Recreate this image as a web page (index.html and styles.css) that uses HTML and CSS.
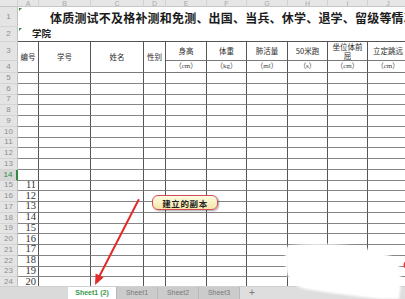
FILE: index.html
```html
<!DOCTYPE html>
<html lang="zh-CN">
<head>
<meta charset="utf-8">
<title>体质测试</title>
<link rel="stylesheet" href="styles.css">
</head>
<body>
<div class="app">
  <div class="sheet">
    <div class="corner"></div>
    <div class="ch">A</div><div class="ch">B</div><div class="ch">C</div><div class="ch">D</div><div class="ch">E</div><div class="ch">F</div><div class="ch">G</div><div class="ch">H</div><div class="ch">I</div><div class="ch">J</div>

    <div class="rh">1</div><div class="title tri">体质测试不及格补测和免测、出国、当兵、休学、退学、留级等情况</div>
    <div class="rh">2</div><div class="college tri">学院</div>

    <div class="rh">3</div>
    <div class="hd tall">编号</div><div class="hd tall">学号</div><div class="hd tall">姓名</div><div class="hd tall">性别</div>
    <div class="hd">身高</div><div class="hd">体重</div><div class="hd">肺活量</div><div class="hd">50米跑</div><div class="hd wrap">坐位体前屈</div><div class="hd">立定跳远</div>
    <div class="rh">4</div>
    <div class="hd u">（cm）</div><div class="hd u">（kg）</div><div class="hd u">（ml）</div><div class="hd u">（s）</div><div class="hd u">（cm）</div><div class="hd u">（cm）</div>

    <div class="rh">5</div><div class="c"></div><div class="c"></div><div class="c"></div><div class="c"></div><div class="c"></div><div class="c"></div><div class="c"></div><div class="c"></div><div class="c"></div><div class="c"></div>
    <div class="rh">6</div><div class="c"></div><div class="c"></div><div class="c"></div><div class="c"></div><div class="c"></div><div class="c"></div><div class="c"></div><div class="c"></div><div class="c"></div><div class="c"></div>
    <div class="rh">7</div><div class="c"></div><div class="c"></div><div class="c"></div><div class="c"></div><div class="c"></div><div class="c"></div><div class="c"></div><div class="c"></div><div class="c"></div><div class="c"></div>
    <div class="rh">8</div><div class="c"></div><div class="c"></div><div class="c"></div><div class="c"></div><div class="c"></div><div class="c"></div><div class="c"></div><div class="c"></div><div class="c"></div><div class="c"></div>
    <div class="rh">9</div><div class="c"></div><div class="c"></div><div class="c"></div><div class="c"></div><div class="c"></div><div class="c"></div><div class="c"></div><div class="c"></div><div class="c"></div><div class="c"></div>
    <div class="rh">10</div><div class="c"></div><div class="c"></div><div class="c"></div><div class="c"></div><div class="c"></div><div class="c"></div><div class="c"></div><div class="c"></div><div class="c"></div><div class="c"></div>
    <div class="rh">11</div><div class="c"></div><div class="c"></div><div class="c"></div><div class="c"></div><div class="c"></div><div class="c"></div><div class="c"></div><div class="c"></div><div class="c"></div><div class="c"></div>
    <div class="rh">12</div><div class="c"></div><div class="c"></div><div class="c"></div><div class="c"></div><div class="c"></div><div class="c"></div><div class="c"></div><div class="c"></div><div class="c"></div><div class="c"></div>
    <div class="rh">13</div><div class="c"></div><div class="c"></div><div class="c"></div><div class="c"></div><div class="c"></div><div class="c"></div><div class="c"></div><div class="c"></div><div class="c"></div><div class="c"></div>
    <div class="rh sel">14</div><div class="c"></div><div class="c"></div><div class="c"></div><div class="c"></div><div class="c"></div><div class="c"></div><div class="c"></div><div class="c"></div><div class="c"></div><div class="c"></div>
    <div class="rh">15</div><div class="c n">11</div><div class="c"></div><div class="c"></div><div class="c"></div><div class="c"></div><div class="c"></div><div class="c"></div><div class="c"></div><div class="c"></div><div class="c"></div>
    <div class="rh">16</div><div class="c n">12</div><div class="c"></div><div class="c"></div><div class="c"></div><div class="c"></div><div class="c"></div><div class="c"></div><div class="c"></div><div class="c"></div><div class="c"></div>
    <div class="rh">17</div><div class="c n">13</div><div class="c"></div><div class="c"></div><div class="c"></div><div class="c"></div><div class="c"></div><div class="c"></div><div class="c"></div><div class="c"></div><div class="c"></div>
    <div class="rh">18</div><div class="c n">14</div><div class="c"></div><div class="c"></div><div class="c"></div><div class="c"></div><div class="c"></div><div class="c"></div><div class="c"></div><div class="c"></div><div class="c"></div>
    <div class="rh">19</div><div class="c n">15</div><div class="c"></div><div class="c"></div><div class="c"></div><div class="c"></div><div class="c"></div><div class="c"></div><div class="c"></div><div class="c"></div><div class="c"></div>
    <div class="rh">20</div><div class="c n">16</div><div class="c"></div><div class="c"></div><div class="c"></div><div class="c"></div><div class="c"></div><div class="c"></div><div class="c"></div><div class="c"></div><div class="c"></div>
    <div class="rh">21</div><div class="c n">17</div><div class="c"></div><div class="c"></div><div class="c"></div><div class="c"></div><div class="c"></div><div class="c"></div><div class="c"></div><div class="c"></div><div class="c"></div>
    <div class="rh">22</div><div class="c n">18</div><div class="c"></div><div class="c"></div><div class="c"></div><div class="c"></div><div class="c"></div><div class="c"></div><div class="c"></div><div class="c"></div><div class="c"></div>
    <div class="rh">23</div><div class="c n">19</div><div class="c"></div><div class="c"></div><div class="c"></div><div class="c"></div><div class="c"></div><div class="c"></div><div class="c"></div><div class="c"></div><div class="c"></div>
    <div class="rh">24</div><div class="c n">20</div><div class="c"></div><div class="c"></div><div class="c"></div><div class="c"></div><div class="c"></div><div class="c"></div><div class="c"></div><div class="c"></div><div class="c"></div>
  </div>

  <div class="tabs">
    <div class="lead"></div>
    <div class="tab active">Sheet1 (2)</div>
    <div class="tab">Sheet1</div>
    <div class="tab">Sheet2</div>
    <div class="tab">Sheet3</div>
    <div class="plus">+</div>
  </div>

  <svg class="overlay" width="405" height="299" viewBox="0 0 405 299" aria-hidden="true">
    <defs>
      <filter id="soft" x="-10%" y="-10%" width="120%" height="120%">
        <feGaussianBlur stdDeviation="1.2"/>
      </filter>
    </defs>
    <path d="M286 247 C300 243 330 243 350 246 C372 249 392 254 398 262 C402 272 401 288 399 299 L382 299 C360 297 330 293 305 289 C294 286 288 280 286 270 C285 262 285 252 286 247 Z" fill="#fff" filter="url(#soft)"/>
    <circle cx="408" cy="265" r="4.5" fill="#e23b3b"/>
    <line x1="138.5" y1="200" x2="99.5" y2="276" stroke="#e42a2a" stroke-width="2" stroke-linecap="round"/>
    <polygon points="95,285 103.6,277.6 95.6,273.6" fill="#e42a2a"/>
  </svg>

  <div class="callout">建立的副本</div>
</div>
</body>
</html>
```

FILE: styles.css
```css
* {
  box-sizing: border-box;
  margin: 0;
  padding: 0;
}

body {
  margin: 0;
  background: #fff;
  font-family: "Noto Sans CJK SC", "Liberation Sans", sans-serif;
}

.app {
  position: relative;
  width: 405px;
  height: 299px;
  overflow: hidden;
  display: flex;
  flex-direction: column;
  background: #fff;
}

.sheet {
  flex: 1;
  min-height: 0;
  width: 409px;
  overflow: hidden;
  display: grid;
  grid-template-columns: 18px 21px 52px 53px 22px 41px 40px 41px 40px 40px 41px;
  grid-template-rows: 7px 20px 15px 19px 12px repeat(20, 10.75px);
}

.corner,
.ch {
  background: #e6e6e6;
  border-right: 1px solid #d2d2d2;
  border-bottom: 1px solid #c6c6c6;
}

.ch {
  display: flex;
  align-items: flex-end;
  justify-content: center;
  overflow: hidden;
  font: 7px/5px "Liberation Sans", sans-serif;
  color: #a8a8a8;
}

.rh {
  display: flex;
  align-items: center;
  justify-content: center;
  background: #e4e4e4;
  border-right: 1px solid #c0c0c0;
  border-bottom: 1px solid #d4d4d4;
  font: 8px/1 "Liberation Sans", sans-serif;
  color: #8e8e8e;
}

.rh.sel {
  background: #d6d6d6;
  color: #2f8a45;
  border-right: 2px solid #2f8a45;
}

.title {
  grid-column: span 10;
  display: flex;
  align-items: center;
  padding-left: 32px;
  white-space: nowrap;
  overflow: hidden;
  font-size: 12px;
  font-weight: 700;
  letter-spacing: 0.2px;
  color: #1c1c1c;
}

.college {
  grid-column: span 10;
  display: flex;
  align-items: center;
  padding: 0 0 2px 14px;
  border-bottom: 1px solid #555;
  font-size: 9.5px;
  font-weight: 700;
  color: #222;
}

.tri {
  position: relative;
}

.tri::before {
  content: "";
  position: absolute;
  left: 1px;
  top: 1px;
  border-top: 3px solid #3b8a4a;
  border-right: 3px solid transparent;
}

.hd {
  display: flex;
  align-items: center;
  justify-content: center;
  text-align: center;
  overflow: hidden;
  border-right: 1px solid #555;
  border-bottom: 1px solid #7a7a7a;
  font-size: 7.5px;
  line-height: 1.25;
  color: #2a2a2a;
  white-space: nowrap;
}

.hd.tall {
  grid-row: span 2;
}

.hd.wrap {
  white-space: normal;
  padding: 0 3px;
  word-break: break-all;
}

.hd.u {
  font-family: "Liberation Serif", "Noto Sans CJK SC", serif;
  font-size: 7px;
  color: #444;
}

.c {
  border-right: 1px solid #555;
  border-bottom: 1px solid #858585;
}

.n {
  display: flex;
  align-items: flex-end;
  justify-content: flex-end;
  padding-right: 2px;
  font: 10.5px/1 "Liberation Serif", serif;
  color: #333;
}

.tabs {
  flex: 0 0 13px;
  display: flex;
  align-items: stretch;
  background: #dedede;
  border-top: 1px solid #cfcfcf;
  font: 7px/12px "Liberation Sans", sans-serif;
  color: #7a7a7a;
}

.lead {
  width: 68px;
  background: #dadada;
}

.tab {
  width: 41px;
  text-align: center;
  background: #cbcbcb;
  border-right: 1px solid #b8b8b8;
}

.tab.active {
  width: 49px;
  background: #fff;
  color: #3a9a4c;
  font-weight: 700;
}

.plus {
  width: 24px;
  text-align: center;
  font-size: 10px;
  color: #777;
}

.overlay {
  position: absolute;
  left: 0;
  top: 0;
  pointer-events: none;
}

.callout {
  position: absolute;
  left: 152px;
  top: 195px;
  width: 66px;
  height: 15px;
  display: flex;
  align-items: center;
  justify-content: center;
  border: 1px solid #d8485c;
  border-radius: 6px;
  background: linear-gradient(#fffbe2, #f6e7a6);
  box-shadow: 1px 1px 2px rgba(0, 0, 0, 0.35);
  font-size: 8.5px;
  font-weight: 700;
  letter-spacing: 0.6px;
  color: #222;
}
```
